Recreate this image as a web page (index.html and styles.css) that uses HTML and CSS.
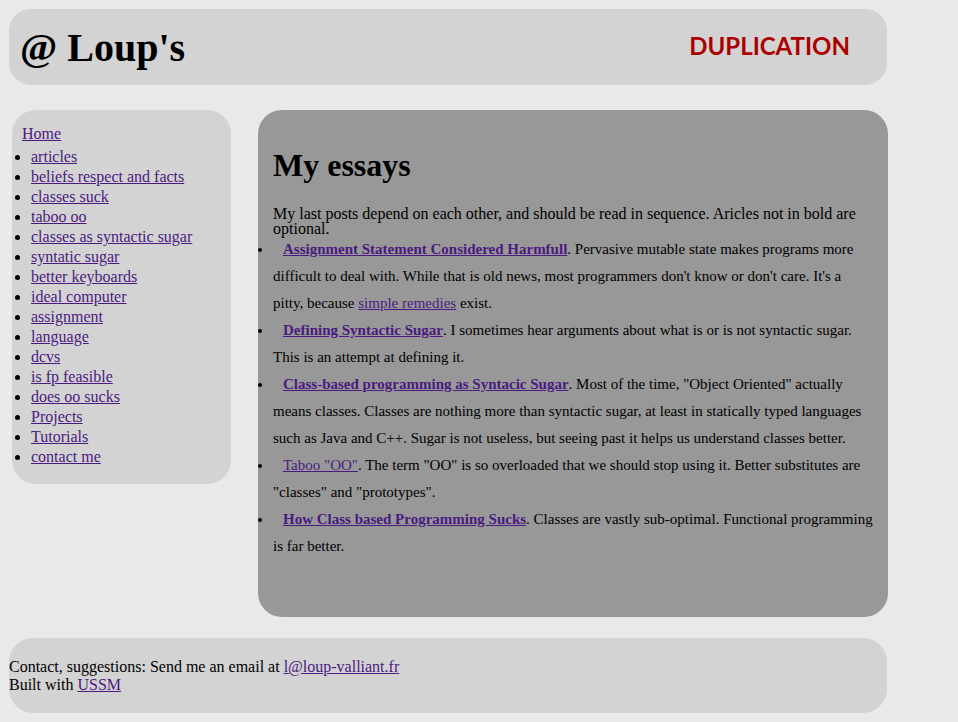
FILE: index.html
```html
<!DOCTYPE html>
<html lang="en">
<head>
<meta charset="utf-8">
<title>@ Loup's — Duplication</title>
<link rel="stylesheet" href="styles.css">
</head>
<body>
<header class="site-header">
  <h1 class="site-title">@ Loup's</h1>
  <div class="site-tag">DUPLICATION</div>
</header>
<div class="columns">
  <nav class="sidebar">
    <div class="home"><a href="#">Home</a></div>
    <ul class="nav-list">
      <li><a href="#">articles</a></li>
      <li><a href="#">beliefs respect and facts</a></li>
      <li><a href="#">classes suck</a></li>
      <li><a href="#">taboo oo</a></li>
      <li><a href="#">classes as syntactic sugar</a></li>
      <li><a href="#">syntatic sugar</a></li>
      <li><a href="#">better keyboards</a></li>
      <li><a href="#">ideal computer</a></li>
      <li><a href="#">assignment</a></li>
      <li><a href="#">language</a></li>
      <li><a href="#">dcvs</a></li>
      <li><a href="#">is fp feasible</a></li>
      <li><a href="#">does oo sucks</a></li>
      <li><a href="#">Projects</a></li>
      <li><a href="#">Tutorials</a></li>
      <li><a href="#">contact me</a></li>
    </ul>
  </nav>
  <main class="content">
    <h1 class="page-title">My essays</h1>
    <p class="intro">My last posts depend on each other, and should be read in sequence. Aricles not in bold are optional.</p>
    <ul class="essays">
      <li><a class="strong" href="#">Assignment Statement Considered Harmfull</a>. Pervasive mutable state makes programs more difficult to deal with. While that is old news, most programmers don't know or don't care. It's a pitty, because <a href="#">simple remedies</a> exist.</li>
      <li><a class="strong" href="#">Defining Syntactic Sugar</a>. I sometimes hear arguments about what is or is not syntactic sugar. This is an attempt at defining it.</li>
      <li><a class="strong" href="#">Class-based programming as Syntacic Sugar</a>. Most of the time, "Object Oriented" actually means classes. Classes are nothing more than syntactic sugar, at least in statically typed languages such as Java and C++. Sugar is not useless, but seeing past it helps us understand classes better.</li>
      <li><a href="#">Taboo "OO"</a>. The term "OO" is so overloaded that we should stop using it. Better substitutes are "classes" and "prototypes".</li>
      <li><a class="strong" href="#">How Class based Programming Sucks</a>. Classes are vastly sub-optimal. Functional programming is far better.</li>
    </ul>
  </main>
</div>
<footer class="site-footer">
  Contact, suggestions: Send me an email at <a href="#">l@loup-valliant.fr</a><br>
  Built with <a href="#">USSM</a>
</footer>
</body>
</html>
```

FILE: styles.css
```css
html, body {
  margin: 0;
  padding: 0;
}
body {
  background: #e9e9e9;
  font-family: "Liberation Serif", "Times New Roman", serif;
  font-size: 16px;
  color: #000;
  padding: 9px 71px 9px 9px;
  width: 878px;
}
a {
  color: #4b1a80;
}
.site-header {
  background: #d3d3d3;
  border-radius: 22px;
  height: 76px;
  display: flex;
  align-items: center;
  justify-content: space-between;
  padding: 0 37px 0 11px;
  box-sizing: border-box;
}
.site-title {
  margin: 0;
  font-size: 40px;
  font-weight: bold;
  line-height: 46px;
  padding-top: 1px;
}
.site-tag {
  font-family: Lato, "Open Sans", sans-serif;
  font-weight: bold;
  font-size: 24px;
  color: #aa0000;
  padding-bottom: 4px;
}
.columns {
  display: flex;
  align-items: flex-start;
  gap: 27px;
  margin: 25px 0 21px 3px;
}
.sidebar {
  width: 219px;
  flex: none;
  background: #d3d3d3;
  border-radius: 24px;
  padding: 14px 0 17px 0;
  box-sizing: border-box;
}
.home {
  padding-left: 10px;
  line-height: 20px;
  margin-bottom: 3px;
}
.nav-list {
  margin: 0;
  padding-left: 19px;
  line-height: 20px;
}
.content {
  width: 630px;
  flex: none;
  background: #989898;
  border-radius: 24px;
  padding: 37px 15px 57px 15px;
  box-sizing: border-box;
}
.page-title {
  margin: 0;
  font-size: 32px;
  line-height: 37px;
}
.intro {
  margin: 22px 0 0 0;
  font-size: 16px;
  line-height: 15px;
}
.essays {
  margin: 0;
  padding: 0;
  font-size: 15px;
  line-height: 27px;
}
.essays li {
  text-indent: 10px;
}
.strong {
  font-weight: bold;
}
.site-footer {
  background: #d3d3d3;
  border-radius: 24px;
  padding: 20px 0 19px 0;
  line-height: 18px;
}
```
